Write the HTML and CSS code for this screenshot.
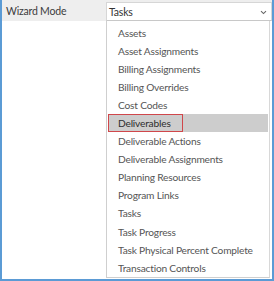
FILE: index.html
```html
<!DOCTYPE html>
<html>
<head>
<meta charset="utf-8">
<link rel="stylesheet" href="styles.css">
</head>
<body>
<div class="frame">
  <div class="header">
    <div class="label">Wizard Mode</div>
    <div class="select">
      <span class="value">Tasks</span>
      <svg class="chev" width="7" height="5" viewBox="0 0 7 5"><path d="M1 1.2 L3.5 3.6 L6 1.2" fill="none" stroke="#666" stroke-width="1.1"/></svg>
    </div>
  </div>
  <div class="body">
    <div class="left"></div>
    <ul class="list">
      <li>Assets</li>
      <li>Asset Assignments</li>
      <li>Billing Assignments</li>
      <li>Billing Overrides</li>
      <li>Cost Codes</li>
      <li class="selected"><span class="mark">Deliverables</span></li>
      <li>Deliverable Actions</li>
      <li>Deliverable Assignments</li>
      <li>Planning Resources</li>
      <li>Program Links</li>
      <li>Tasks</li>
      <li>Task Progress</li>
      <li>Task Physical Percent Complete</li>
      <li>Transaction Controls</li>
    </ul>
  </div>
</div>
</body>
</html>
```

FILE: styles.css
```css
* { box-sizing: border-box; }
html, body { margin: 0; padding: 0; background: #fff; }
body { width: 274px; height: 281px; overflow: hidden; font-family: "Lato", "Open Sans", sans-serif; }
.frame {
  width: 274px; height: 281px;
  border-left: 2px solid #5b9bd5;
  border-right: 2px solid #5b9bd5;
  border-bottom: 2px solid #5b9bd5;
  display: flex; flex-direction: column;
}
.header { display: flex; height: 21px; background: #eeeeee; padding-top: 2px; }
.label {
  width: 104px; padding-left: 4px; font-size: 10.5px; letter-spacing: -0.2px; color: #3c3c3c;
  line-height: 18px;
}
.select {
  flex: 1; background: #fff; border: 1px solid #d6d6d6;
  border-bottom: 1px solid #c8c8c8;
  display: flex; align-items: center; justify-content: space-between;
  padding: 0 4px 0 2px; height: 19px;
}
.value { font-size: 10.5px; letter-spacing: -0.2px; color: #333; }
.chev { margin-top: 1px; }
.body { flex: 1; display: flex; }
.left { width: 104px; }
.list {
  flex: 1; margin: 0 2px 0 0; padding: 2.5px 1px 0 1px; list-style: none;
  border-left: 1px solid #cfcfcf; border-right: 1px solid #d8d8d8; border-bottom: 1px solid #cfcfcf;
  height: 257px;
}
.list li {
  height: 18.1px; line-height: 18.1px; padding-left: 10px;
  font-size: 10.2px; letter-spacing: -0.2px; color: #555; white-space: nowrap;
}
.list li.selected { background: #cdcdcd; padding-left: 0; }
.mark {
  display: inline-block; height: 18.1px; line-height: 16px; padding-left: 9px; width: 75px;
  border: 1px solid #d0474b; color: #2e2e2e;
}
```
